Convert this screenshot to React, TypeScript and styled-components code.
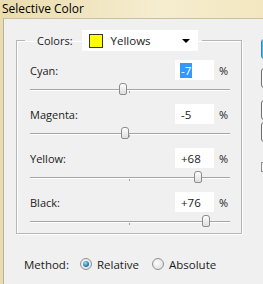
import React from "react";
import styled, { createGlobalStyle } from "styled-components";

const GlobalStyle = createGlobalStyle`
  html, body {
    margin: 0;
    padding: 0;
  }
  body {
    width: 263px;
    height: 284px;
    overflow: hidden;
    font-family: "Open Sans", "Liberation Sans", sans-serif;
    color: #1b1b1b;
  }
`;

type Channel = { name: string; value: number; selected?: boolean };

const channels: Channel[] = [
  { name: "Cyan", value: -7, selected: true },
  { name: "Magenta", value: -5 },
  { name: "Yellow", value: 68 },
  { name: "Black", value: 76 },
];

const fmt = (v: number) => (v > 0 ? `+${v}` : `${v}`);

export default function App() {
  return (
    <>
      <GlobalStyle />
      <Window>
        <TitleBar>Selective Color</TitleBar>
        <Client>
          <MainColumn>
            <Group>
              <Legend>
                <LegendLabel>Colors:</LegendLabel>
                <Dropdown>
                  <Swatch />
                  <DropdownText>Yellows</DropdownText>
                  <Arrow />
                </Dropdown>
              </Legend>
              <RowList>
                {channels.map((c) => (
                  <Row key={c.name}>
                    <RowHeader>
                      <Label>{c.name}:</Label>
                      <ValueBox>
                        <ValueText $selected={c.selected}>{fmt(c.value)}</ValueText>
                      </ValueBox>
                      <Percent>%</Percent>
                    </RowHeader>
                    <Slider>
                      <Track />
                      <Tick />
                      <Thumb style={{ left: `${(c.value + 100) / 2}%` }} />
                    </Slider>
                  </Row>
                ))}
              </RowList>
            </Group>
            <MethodRow>
              <MethodLabel>Method:</MethodLabel>
              <Radio $checked />
              <RadioText>Relative</RadioText>
              <Radio />
              <RadioText>Absolute</RadioText>
            </MethodRow>
          </MainColumn>
          <ButtonColumn>
            <Button $primary $gap={0} />
            <Button $gap={9} />
            <Button $gap={12} />
            <Button $gap={2} />
            <Check />
          </ButtonColumn>
        </Client>
      </Window>
    </>
  );
}

const Window = styled.div`
  width: 263px;
  height: 284px;
  display: flex;
  flex-direction: column;
  background: linear-gradient(to right, #eadcae, #f5edcf 60%, #f2e7c0);
`;

const TitleBar = styled.div`
  height: 18px;
  line-height: 17px;
  padding-left: 2px;
  font-size: 12px;
  color: #000;
  flex-shrink: 0;
`;

const Client = styled.div`
  flex: 1;
  display: flex;
  margin-left: 3px;
  border-left: 1px solid #b9b29a;
  border-top: 1px solid #c9c1a4;
  background: #f0f0f0;
  min-width: 0;
`;

const MainColumn = styled.div`
  width: 238px;
  flex-shrink: 0;
  padding-left: 12px;
  padding-top: 11px;
  box-sizing: border-box;
  display: flex;
  flex-direction: column;
`;

const Group = styled.fieldset`
  margin: 0;
  width: 226px;
  box-sizing: border-box;
  border: 1px solid #b3b7ba;
  box-shadow: inset 1px 1px 0 #fff, 1px 1px 0 #fff;
  padding: 0 0 0 8px;
  height: 204px;
`;

const Legend = styled.legend`
  display: flex;
  align-items: center;
  padding: 0 4px 0 12px;
  height: 21px;
`;

const LegendLabel = styled.span`
  font-size: 11px;
  margin-right: 9px;
`;

const Dropdown = styled.div`
  width: 116px;
  height: 21px;
  box-sizing: border-box;
  background: #fff;
  display: flex;
  align-items: center;
  padding: 0 5px 0 7px;
`;

const Swatch = styled.div`
  width: 14px;
  height: 14px;
  box-sizing: border-box;
  background: #ffff00;
  border: 1px solid #3a3a1a;
`;

const DropdownText = styled.span`
  flex: 1;
  font-size: 11.5px;
  margin-left: 8px;
`;

const Arrow = styled.div`
  width: 0;
  height: 0;
  border-left: 4px solid transparent;
  border-right: 4px solid transparent;
  border-top: 4px solid #000;
  margin-right: 3px;
`;

const RowList = styled.div`
  display: flex;
  flex-direction: column;
  gap: 4px;
  padding: 9px 2px 0 5px;
`;

const Row = styled.div`
  display: flex;
  flex-direction: column;
  width: 200px;
`;

const RowHeader = styled.div`
  display: flex;
  align-items: center;
  height: 20px;
`;

const Label = styled.span`
  flex: 1;
  font-size: 11px;
`;

const ValueBox = styled.div`
  width: 39px;
  height: 20px;
  box-sizing: border-box;
  background: #fff;
  display: flex;
  align-items: center;
  padding-left: 5px;
`;

const ValueText = styled.span<{ $selected?: boolean }>`
  font-size: 11.5px;
  line-height: 15px;
  padding: 0 1px;
  background: ${(p) => (p.$selected ? "#3399ff" : "transparent")};
  color: ${(p) => (p.$selected ? "#fff" : "#1b1b1b")};
`;

const Percent = styled.span`
  margin-left: 5px;
  width: 11px;
  font-size: 11px;
`;

const Slider = styled.div`
  position: relative;
  height: 20px;
`;

const Track = styled.div`
  position: absolute;
  left: 0;
  right: 0;
  top: 9px;
  height: 1px;
  background: #a5a5a5;
  border-bottom: 1px solid #fff;
`;

const Tick = styled.div`
  position: absolute;
  left: 99px;
  top: 11px;
  width: 1px;
  height: 2px;
  background: #a5a5a5;
`;

const Thumb = styled.div`
  position: absolute;
  top: 3px;
  width: 8px;
  height: 12px;
  margin-left: -4px;
  box-sizing: border-box;
  border: 1px solid #8c8c8c;
  border-radius: 3px 3px 2px 2px;
  background: linear-gradient(#fdfdfd, #dedede);
`;

const MethodRow = styled.div`
  display: flex;
  align-items: center;
  height: 16px;
  margin-top: 22px;
  padding-left: 8px;
  font-size: 11.5px;
`;

const MethodLabel = styled.span`
  margin-right: 11px;
`;

const Radio = styled.span<{ $checked?: boolean }>`
  width: 12px;
  height: 12px;
  box-sizing: border-box;
  border-radius: 50%;
  border: 1px solid #8f9193;
  background: radial-gradient(circle at 40% 40%, #fdfdfd, #d9d9d9);
  display: flex;
  align-items: center;
  justify-content: center;
  margin-right: 5px;
  &::after {
    content: "";
    display: ${(p) => (p.$checked ? "block" : "none")};
    width: 6px;
    height: 6px;
    border-radius: 50%;
    background: radial-gradient(circle at 40% 35%, #9fe2f6, #2a86b8 55%, #14507a);
  }
`;

const RadioText = styled.span`
  margin-right: 13px;
`;

const ButtonColumn = styled.div`
  display: flex;
  flex-direction: column;
  margin-left: 19px;
  padding-top: 20px;
  flex-shrink: 0;
`;

const Button = styled.div<{ $primary?: boolean; $gap: number }>`
  width: 75px;
  height: 20px;
  margin-top: ${(p) => p.$gap}px;
  box-sizing: border-box;
  border-radius: 3px;
  border: 1px solid ${(p) => (p.$primary ? "#3c7fb1" : "#707070")};
  background: ${(p) =>
    p.$primary
      ? "linear-gradient(#e9f6fd, #a9dbf6)"
      : "linear-gradient(#f2f2f2, #dcdcdc)"};
  box-shadow: ${(p) => (p.$primary ? "inset 0 0 0 1px #48c3f0" : "inset 0 0 0 1px #fbfbfb")};
`;

const Check = styled.div`
  width: 8px;
  height: 8px;
  margin-top: 20px;
  border: 1px solid #8f8f8f;
  background: #f4f4f4;
`;
